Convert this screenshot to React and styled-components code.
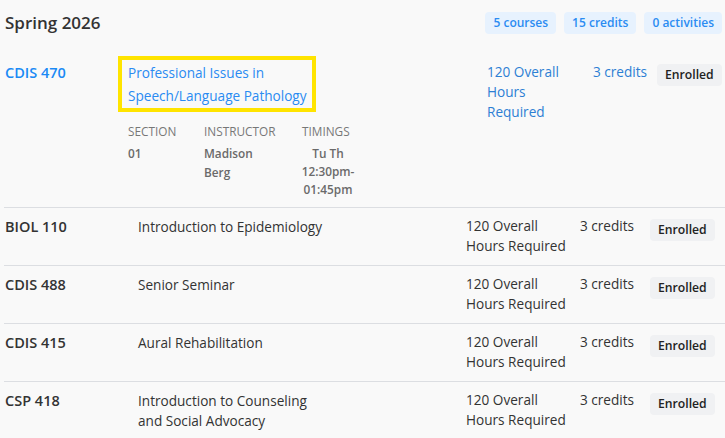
import React from "react";
import styled, { createGlobalStyle } from "styled-components";

const Global = createGlobalStyle`
  html, body { margin: 0; padding: 0; background: #f9f9f9; }
  body { font-family: "Open Sans", "Noto Sans", sans-serif; color: #333; }
  * { box-sizing: border-box; }
`;

const Page = styled.div`
  padding: 0 0 0 4px;
  width: 725px;
`;

const Header = styled.div`
  display: flex;
  align-items: center;
  justify-content: space-between;
  height: 44px;
  padding: 1px 3px 0 1px;
`;

const Term = styled.h2`
  margin: 0;
  font-size: 17px;
  font-weight: 600;
  color: #333;
`;

const Stats = styled.div`
  display: flex;
  gap: 8px;
`;

const Stat = styled.span`
  background: #e7f2fe;
  color: #2b8cf2;
  font-size: 12px;
  font-weight: 600;
  border-radius: 4px;
  padding: 0 8px;
  line-height: 22px;
`;

const Row = styled.div`
  display: grid;
  grid-template-columns: ${(p) => p.$cols};
  align-items: start;
  padding: ${(p) => p.$pad};
  border-top: ${(p) => (p.$first ? "none" : "1px solid #dcdee2")};
  line-height: 20px;
  font-size: 13.6px;
`;

const Code = styled.div`
  font-size: 14.5px;
  font-weight: 600;
  color: ${(p) => (p.$active ? "#1b8af5" : "#333")};
  padding-left: 1px;
  margin-top: ${(p) => p.$offset || "1px"};
`;

const TitleText = styled.div`
  color: #333;
  max-width: 190px;
  margin-top: 1px;
`;

const TitleCell = styled.div``;

const TitleLink = styled.a`
  display: inline-block;
  border: 4px solid #ffe400;
  padding: 1px 5px 1px 6px;
  line-height: 23px;
  color: #2a8bf2;
  text-decoration: none;
`;

const Details = styled.div`
  display: grid;
  grid-template-columns: 54px 76px 52px;
  column-gap: 22px;
  padding: 10px 0 0 10px;
  font-size: 11.8px;
  line-height: 18px;
`;

const DetailLabel = styled.div`
  color: #777;
  text-transform: uppercase;
  margin-bottom: 4px;
`;

const DetailValue = styled.div`
  color: #6a6a6a;
  font-weight: 600;
  text-align: ${(p) => (p.$center ? "center" : "left")};
  margin: ${(p) => (p.$center ? "0 -4px" : "0")};
  line-height: ${(p) => (p.$center ? "18px" : "19px")};
`;

const Hours = styled.div`
  color: ${(p) => (p.$active ? "#2d7fd4" : "#333")};
  margin-top: ${(p) => p.$offset || "0"};
`;

const Credits = styled.div`
  color: ${(p) => (p.$active ? "#2d7fd4" : "#333")};
  margin-top: ${(p) => p.$offset || "0"};
`;

const Status = styled.span`
  justify-self: start;
  margin-top: ${(p) => p.$offset};
  background: #f0f1f3;
  color: #222;
  font-size: 12.2px;
  font-weight: 600;
  border-radius: 4px;
  padding: 0 8px;
  line-height: 22px;
`;

const courses = [
  { code: "BIOL 110", title: "Introduction to Epidemiology" },
  { code: "CDIS 488", title: "Senior Seminar" },
  { code: "CDIS 415", title: "Aural Rehabilitation" },
  { code: "CSP 418", title: "Introduction to Counseling and Social Advocacy" },
];

export default function App() {
  return (
    <Page>
      <Global />
      <Header>
        <Term>Spring 2026</Term>
        <Stats>
          <Stat>5 courses</Stat>
          <Stat>15 credits</Stat>
          <Stat>0 activities</Stat>
        </Stats>
      </Header>

      <Row $first $cols="114px 369px 80px 26px 64px 62px" $pad="12px 0 9px">
        <Code $active $offset="7px">CDIS 470</Code>
        <TitleCell>
          <TitleLink href="#">
            Professional Issues in
            <br />
            Speech/Language Pathology
          </TitleLink>
          <Details>
            <div>
              <DetailLabel>Section</DetailLabel>
              <DetailValue>01</DetailValue>
            </div>
            <div>
              <DetailLabel>Instructor</DetailLabel>
              <DetailValue>Madison Berg</DetailValue>
            </div>
            <div>
              <DetailLabel>Timings</DetailLabel>
              <DetailValue $center>
                Tu Th
                <br />
                12:30pm-
                <br />
                01:45pm
              </DetailValue>
            </div>
          </Details>
        </TitleCell>
        <Hours $active $offset="6px">120 Overall Hours Required</Hours>
        <span />
        <Credits $active $offset="6px">3 credits</Credits>
        <Status $offset="8px">Enrolled</Status>
      </Row>

      {courses.map((c) => (
        <Row key={c.code} $cols="134px 328px 100px 14px 70px 64px" $pad="8px 0 9px">
          <Code>{c.code}</Code>
          <TitleText>{c.title}</TitleText>
          <Hours>120 Overall Hours Required</Hours>
          <span />
          <Credits>3 credits</Credits>
          <Status $offset="3px">Enrolled</Status>
        </Row>
      ))}
    </Page>
  );
}
